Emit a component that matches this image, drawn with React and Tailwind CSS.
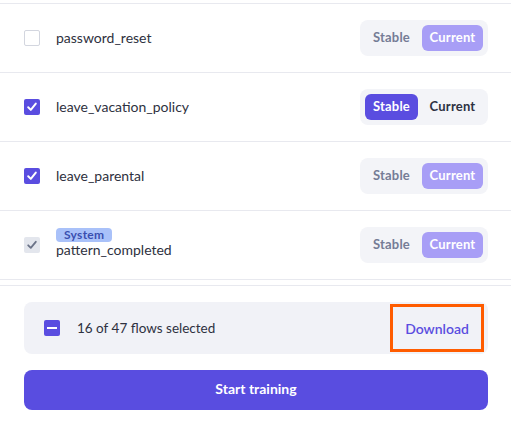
import React, { useState } from 'react';

const flows = [
  { name: 'password_reset', checked: false, version: 'current', locked: true },
  { name: 'leave_vacation_policy', checked: true, version: 'stable', locked: false },
  { name: 'leave_parental', checked: true, version: 'current', locked: true },
  { name: 'pattern_completed', checked: true, version: 'current', locked: true, system: true },
];

const Checkbox = ({ checked, disabled }) => {
  if (disabled) {
    return (
      <span className="w-4 h-4 rounded-[2px] bg-[#e3e6ed] flex items-center justify-center">
        <svg width="12" height="12" viewBox="0 0 12 12" fill="none">
          <path d="M2.2 6.3 4.8 8.8 9.8 2.8" stroke="#6b7388" strokeWidth="1.8" strokeLinecap="round" strokeLinejoin="round" />
        </svg>
      </span>
    );
  }
  return checked ? (
    <span className="w-4 h-4 rounded-[2px] bg-[#5a4de0] flex items-center justify-center">
      <svg width="12" height="12" viewBox="0 0 12 12" fill="none">
        <path d="M2.2 6.3 4.8 8.9 9.8 2.6" stroke="white" strokeWidth="2" strokeLinecap="round" strokeLinejoin="round" />
      </svg>
    </span>
  ) : (
    <span className="w-4 h-4 rounded-[2px] border border-[#d3d6df] bg-white" />
  );
};

const VersionToggle = ({ version, locked }) => (
  <div className="flex items-center gap-1 p-[5px] rounded-lg bg-[#f3f4f8] text-[13px] font-bold tracking-[0.2px]">
    <span
      className={`w-[53px] h-[26px] flex items-center justify-center rounded-md ${
        version === 'stable' ? 'bg-[#5a4de0] text-white' : locked ? 'text-[#757c96]' : 'text-[#2d3142]'
      }`}
    >
      Stable
    </span>
    <span
      className={`w-[61px] h-[26px] flex items-center justify-center rounded-md ${
        version === 'current'
          ? locked ? 'bg-[#a89ef6] text-white' : 'bg-[#5a4de0] text-white'
          : 'text-[#2d3142]'
      }`}
    >
      Current
    </span>
  </div>
);

export default function App() {
  const [items] = useState(flows);

  return (
    <div className="w-[511px] h-[433px] bg-white font-['Lato','Liberation_Sans',sans-serif] text-[#2e3140] overflow-hidden">
      <div className="pt-[3px]">
        <div className="border-b border-[#e8e9ef]">
          {items.map((flow) => (
            <div key={flow.name} className="h-[69px] border-t border-[#e8e9ef] flex items-center pl-6 pr-[23px]">
              <Checkbox checked={flow.checked} disabled={flow.system} />
              <div className="ml-4 flex-1 flex flex-col items-start">
                {flow.system && (
                  <span className="h-[14px] px-2 rounded bg-[#a9c1f9] text-[#3a4fb0] text-[12px] font-bold leading-[14px] tracking-[0.3px] -mt-[3px]">
                    System
                  </span>
                )}
                <span className="text-[14px] leading-[18px] -mt-px">{flow.name}</span>
              </div>
              <VersionToggle version={flow.version} locked={flow.locked} />
            </div>
          ))}
        </div>
      </div>

      <div className="mt-[5px] border-t border-[#e8e9ef] pt-4 pl-6 pr-[23px]">
        <div className="h-[52px] rounded-lg bg-[#f1f2f7] flex items-center pl-5 pr-1">
          <span className="w-4 h-4 rounded-[2px] bg-[#5a4de0] flex items-center justify-center">
            <span className="w-[10px] h-[2px] bg-white" />
          </span>
          <span className="ml-[17px] flex-1 text-[13.5px] leading-[16px] -mt-px">16 of 47 flows selected</span>
          <button className="h-12 w-[94px] border-[3px] border-[#ff5c00] text-[#5a4de0] text-[14px] font-semibold flex items-center justify-center">
            Download
          </button>
        </div>
        <button className="mt-4 w-full h-10 rounded-lg bg-[#594de0] text-white text-[14px] font-bold leading-[16px] pb-[2px]">
          Start training
        </button>
      </div>
    </div>
  );
}
